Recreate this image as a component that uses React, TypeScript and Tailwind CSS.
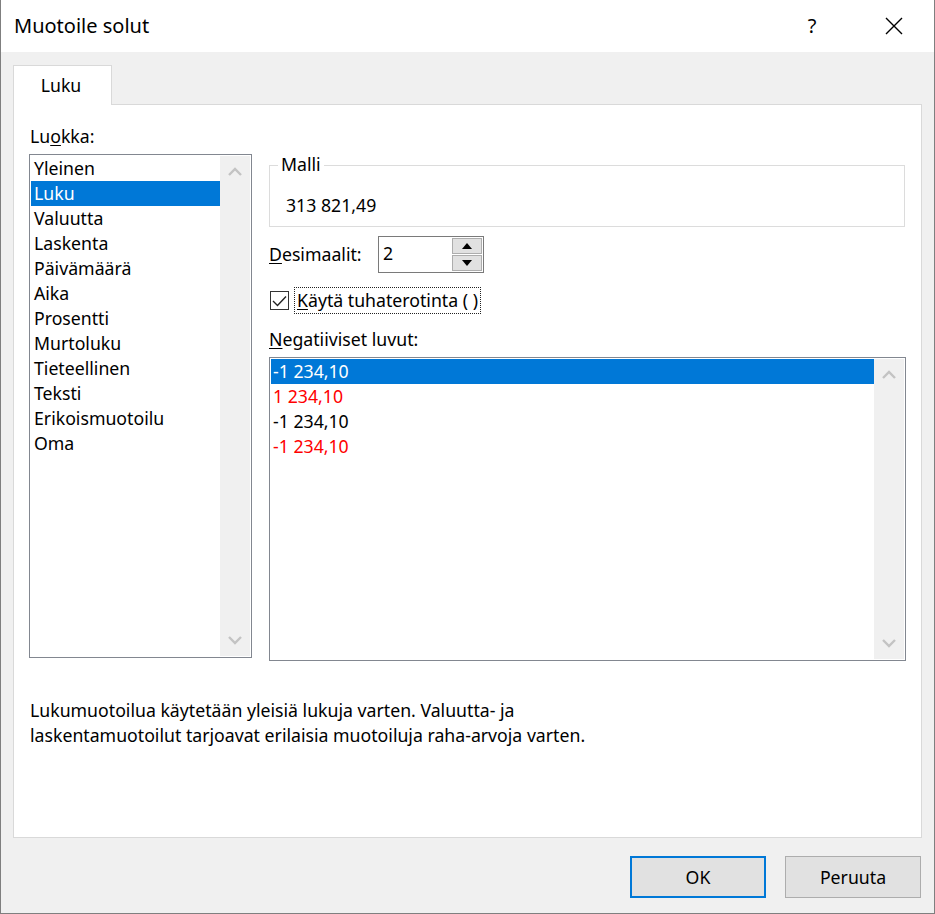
import React from "react";

const categories = [
  "Yleinen",
  "Luku",
  "Valuutta",
  "Laskenta",
  "Päivämäärä",
  "Aika",
  "Prosentti",
  "Murtoluku",
  "Tieteellinen",
  "Teksti",
  "Erikoismuotoilu",
  "Oma",
];

const negatives = [
  { text: "-1 234,10", red: false },
  { text: "1 234,10", red: true },
  { text: "-1 234,10", red: false },
  { text: "-1 234,10", red: true },
];

function Chevron({ up }: { up?: boolean }) {
  return (
    <svg width="14" height="9" viewBox="0 0 14 9" className="block">
      <path
        d={up ? "M1 8 L7 2 L13 8" : "M1 1 L7 7 L13 1"}
        fill="none"
        stroke="#c3c3c3"
        strokeWidth="2.4"
      />
    </svg>
  );
}

function ScrollTrack() {
  return (
    <div className="w-[30px] bg-[#f0f0f0] flex flex-col items-center justify-between py-[11px] shrink-0">
      <Chevron up />
      <Chevron />
    </div>
  );
}

export default function App() {
  return (
    <div
      className="w-[935px] h-[914px] flex flex-col bg-[#f0f0f0] border-x border-b border-[#7f7f7f] text-[17.7px] text-black overflow-hidden"
      style={{ fontFamily: '"Noto Sans", "Open Sans", sans-serif' }}
    >
      {/* Title bar */}
      <div className="h-[52px] bg-white flex items-center shrink-0">
        <div className="pl-[13px] text-[20px] leading-none flex-1">Muotoile solut</div>
        <div className="w-[30px] text-center text-[20px] leading-none mr-[58px]">?</div>
        <div className="mr-[31px]">
          <svg width="18" height="18" viewBox="0 0 18 18" className="block">
            <path d="M1 1 L17 17 M17 1 L1 17" stroke="#000" strokeWidth="1.4" />
          </svg>
        </div>
      </div>

      <div className="flex flex-col px-[12px] pt-[13px]">
        {/* Tab */}
        <div className="flex">
          <div className="w-[99px] h-[40px] bg-white border border-b-0 border-[#d9d9d9] -mb-px relative z-10 flex items-center justify-center pr-[3px]">
            Luku
          </div>
        </div>

        {/* Panel */}
        <div className="h-[734px] bg-white border border-[#d9d9d9] flex flex-col pl-[15px] pr-[14px] pt-[19px]">
          <div className="flex gap-[17px]">
            {/* Left column */}
            <div className="flex flex-col w-[223px]">
              <div className="h-[25px] leading-[25px] mb-[5px] pl-px">
                Lu<span className="underline underline-offset-2">o</span>kka:
              </div>
              <div className="h-[504px] border border-[#828790] flex p-px">
                <div className="flex-1 flex flex-col">
                  {categories.map((c, i) => (
                    <div
                      key={c}
                      className={
                        "h-[25px] leading-[25px] pl-[3px] " +
                        (i === 1 ? "bg-[#0078d7] text-white" : "")
                      }
                    >
                      {c}
                    </div>
                  ))}
                </div>
                <ScrollTrack />
              </div>
            </div>

            {/* Right column */}
            <div className="flex flex-col w-[637px] pt-[41px]">
              <div className="h-[62px] w-[636px] border border-[#dcdcdc] relative flex items-end pl-[16px] pb-[8px]">
                <span className="absolute left-[8px] -top-[14px] bg-white px-[3px] leading-[25px]">Malli</span>
                <span className="leading-[25px]">313 821,49</span>
              </div>

              <div className="flex items-center mt-[9px] h-[37px]">
                <div className="w-[109px]">
                  <span className="underline underline-offset-2">D</span>esimaalit:
                </div>
                <div className="w-[106px] h-[37px] border border-[#7a7a7a] flex">
                  <div className="flex-1 pl-[4px] leading-[33px]">2</div>
                  <div className="w-[31px] flex flex-col py-px pr-px gap-px">
                    <div className="flex-1 bg-[#e1e1e1] border border-[#adadad] flex items-center justify-center">
                      <svg width="10" height="6" viewBox="0 0 10 6" className="block">
                        <path d="M0 6 L5 0 L10 6 Z" fill="#000" />
                      </svg>
                    </div>
                    <div className="flex-1 bg-[#e1e1e1] border border-[#adadad] flex items-center justify-center">
                      <svg width="10" height="6" viewBox="0 0 10 6" className="block">
                        <path d="M0 0 L5 6 L10 0 Z" fill="#000" />
                      </svg>
                    </div>
                  </div>
                </div>
              </div>

              <div className="flex items-center mt-[14px] h-[27px]">
                <div className="w-[19px] h-[19px] border border-[#333] flex items-center justify-center ml-px">
                  <svg width="15" height="12" viewBox="0 0 15 12" className="block">
                    <path d="M1 6 L5.5 10.5 L14 1.5" fill="none" stroke="#222" strokeWidth="1.4" />
                  </svg>
                </div>
                <div className="ml-[5px] h-[27px] w-[187px] border border-dotted border-[#222] flex items-center pl-[2px] whitespace-nowrap">
                  <span className="underline underline-offset-2">K</span>äytä tuhaterotinta ( )
                </div>
              </div>

              <div className="mt-[13px] h-[25px] leading-[25px]">
                <span className="underline underline-offset-2">N</span>egatiiviset luvut:
              </div>

              <div className="mt-[5px] h-[304px] border border-[#828790] flex p-px">
                <div className="flex-1 flex flex-col">
                  {negatives.map((n, i) => (
                    <div
                      key={i}
                      className={
                        "h-[25px] leading-[25px] pl-[2px] " +
                        (i === 0
                          ? "bg-[#0078d7] text-white"
                          : n.red
                          ? "text-[#ff0000]"
                          : "")
                      }
                    >
                      {n.text}
                    </div>
                  ))}
                </div>
                <ScrollTrack />
              </div>
            </div>
          </div>

          <div className="mt-[37px] leading-[25px] pl-px">
            Lukumuotoilua käytetään yleisiä lukuja varten. Valuutta- ja
            <br />
            laskentamuotoilut tarjoavat erilaisia muotoiluja raha-arvoja varten.
          </div>
        </div>

        {/* Buttons */}
        <div className="flex justify-end gap-[19px] mt-[18px] pr-px">
          <button className="w-[136px] h-[42px] bg-[#e1e1e1] border-2 border-[#0078d7]">
            OK
          </button>
          <button className="w-[136px] h-[42px] bg-[#e1e1e1] border border-[#adadad]">
            Peruuta
          </button>
        </div>
      </div>
    </div>
  );
}
